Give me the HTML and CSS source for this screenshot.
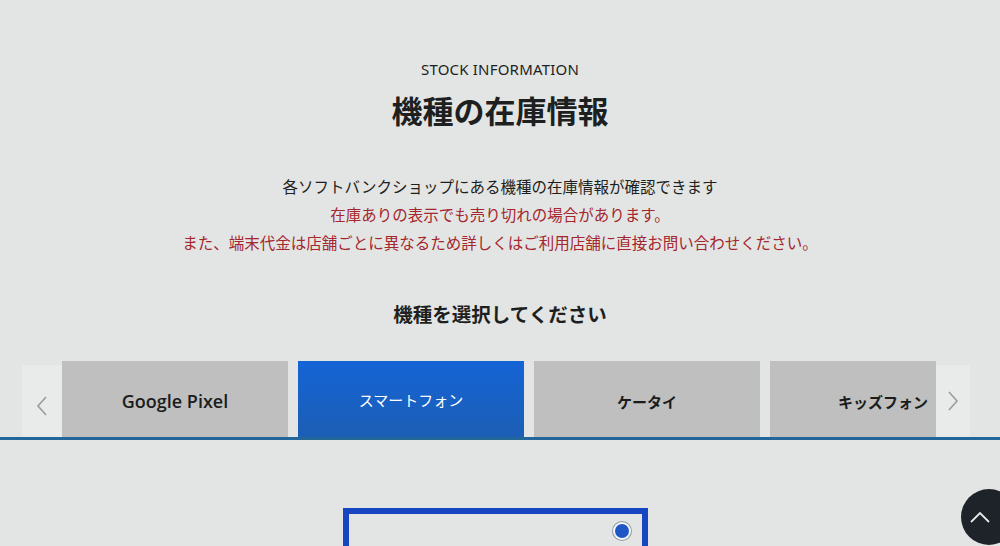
FILE: index.html
```html
<!DOCTYPE html>
<html lang="ja">
  <head>
    <meta charset="UTF-8" />
    <meta name="viewport" content="width=device-width, initial-scale=1.0" />
    <title>機種の在庫情報</title>
    <link rel="stylesheet" href="styles.css">
  </head>
  <body>
    <div class="stock">
      <p class="eyebrow">STOCK INFORMATION</p>
      <h2 class="title">機種の在庫情報</h2>
      <div class="lead">
        <p>各ソフトバンクショップにある機種の在庫情報が確認できます</p>
        <p class="note">在庫ありの表示でも売り切れの場合があります。</p>
        <p class="note">また、端末代金は店舗ごとに異なるため詳しくはご利用店舗に直接お問い合わせください。</p>
      </div>
      <h3 class="subtitle">機種を選択してください</h3>
    </div>

    <div class="tabs-wrap">
      <div class="carousel">
        <button class="arrow">
          <svg width="14" height="22" viewBox="0 0 14 22"><path d="M11 2 L3 11 L11 20" fill="none" stroke="#9a9c9c" stroke-width="1.6"/></svg>
        </button>
        <div class="tab-track">
          <div class="tab tab-pixel">Google Pixel</div>
          <div class="tab active">スマートフォン</div>
          <div class="tab">ケータイ</div>
          <div class="tab">キッズフォン</div>
        </div>
        <button class="arrow">
          <svg width="14" height="22" viewBox="0 0 14 22"><path d="M3 2 L11 11 L3 20" fill="none" stroke="#9a9c9c" stroke-width="1.6"/></svg>
        </button>
      </div>
    </div>

    <div class="models">
      <div class="card">
        <span class="radio"></span>
      </div>
    </div>

    <button class="to-top">
      <svg width="22" height="14" viewBox="0 0 22 14"><path d="M2 12 L11 3 L20 12" fill="none" stroke="#e6e8e8" stroke-width="1.8"/></svg>
    </button>
  </body>
</html>
```

FILE: styles.css
```css
body,
h2,
h3,
p,
button {
  margin: 0;
  padding: 0;
  box-sizing: border-box;
}
body {
  background: #e3e5e5;
  color: #1e1f20;
  font-family: "Noto Sans CJK JP", "Noto Sans", sans-serif;
  overflow: hidden;
}
.stock {
  padding-top: 59px;
  text-align: center;
}
.eyebrow {
  font-family: "Noto Sans", sans-serif;
  font-size: 15px;
  line-height: 20px;
  letter-spacing: 0.2px;
}
.title {
  font-size: 31px;
  line-height: 40px;
  font-weight: 700;
  margin-top: 11px;
}
.lead {
  margin-top: 42px;
  font-size: 15.5px;
  line-height: 28px;
}
.note {
  color: #a5262c;
}
.subtitle {
  margin-top: 44px;
  font-size: 19.5px;
  line-height: 28px;
  font-weight: 700;
}
.tabs-wrap {
  margin-top: 33px;
  border-bottom: 3px solid #23679a;
}
.carousel {
  display: flex;
  align-items: flex-end;
  margin-left: 22px;
  width: 948px;
  height: 76px;
}
.arrow {
  width: 40px;
  height: 72px;
  display: flex;
  align-items: center;
  justify-content: center;
  background: #e9ebeb;
  border: none;
  flex-shrink: 0;
  padding-top: 10px;
}
.arrow:last-child {
  width: 34px;
  padding-top: 0;
}
.tab-track {
  display: flex;
  align-items: flex-end;
  gap: 10px;
  width: 874px;
  height: 76px;
  overflow: hidden;
}
.tab {
  flex: 0 0 226px;
  height: 72px;
  display: flex;
  align-items: center;
  justify-content: center;
  background: #bebfbe;
  font-size: 15px;
  font-weight: 700;
  color: #1b1c1c;
  padding-top: 6px;
}
.tab-pixel {
  font-family: "Open Sans", "Noto Sans", sans-serif;
  font-size: 18px;
  font-weight: 600;
  padding-top: 16px;
}
.tab.active {
  height: 76px;
  background: linear-gradient(#1464d8, #1c5eb4);
  color: #fff;
  font-weight: 400;
  padding-top: 4px;
}
.models {
  padding: 68px 0 0 343px;
}
.card {
  position: relative;
  box-sizing: border-box;
  width: 305px;
  height: 38px;
  border: 6px solid #1646c2;
  border-bottom: none;
}
.radio {
  position: absolute;
  top: 10px;
  right: 13px;
  width: 14px;
  height: 14px;
  border-radius: 50%;
  background: #1f55c4;
  box-shadow: 0 0 0 2px #f4f6f6, 0 0 0 3px #8e9aa8;
}
.to-top {
  position: fixed;
  left: 961px;
  top: 489px;
  width: 56px;
  height: 56px;
  border-radius: 50%;
  border: none;
  background: #1d2329;
  display: flex;
  align-items: center;
  justify-content: center;
  padding-right: 18px;
}
```
